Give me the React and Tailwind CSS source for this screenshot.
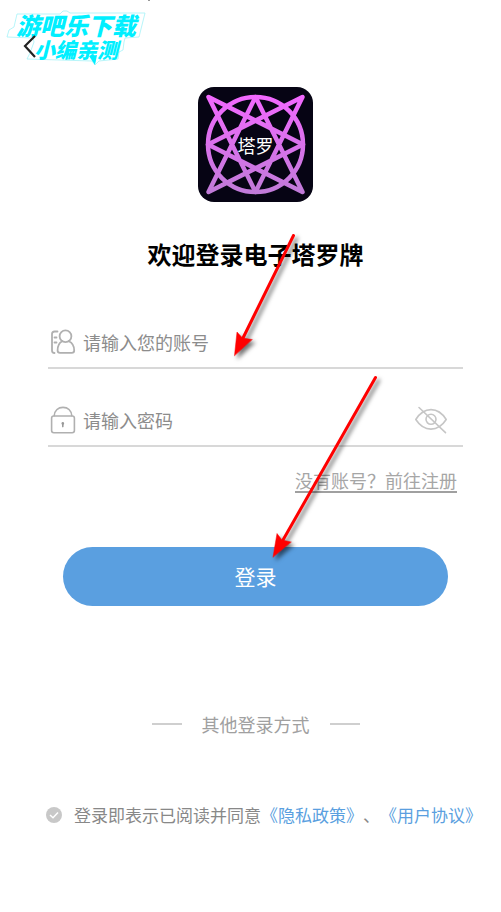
import { useState } from 'react';

function TarotLogo() {
  return (
    <div className="grid size-[115px] place-items-center overflow-hidden rounded-2xl bg-[#060414]">
      <svg viewBox="0 0 115 115" fill="none" className="col-start-1 row-start-1 size-full" aria-hidden="true">
        <defs>
          <linearGradient id="tarot-star" gradientUnits="userSpaceOnUse" x1="0" y1="8" x2="0" y2="107">
            <stop offset="0" stopColor="#f268ff" />
            <stop offset="1" stopColor="#c07bd8" />
          </linearGradient>
        </defs>
        <g stroke="url(#tarot-star)" strokeWidth="4.5" strokeLinejoin="round">
          <circle cx="57.5" cy="57.5" r="47.5" />
          <path d="M57.5 10 L104.5 105 L10 57.5 L104.5 10 L57.5 105 L10.5 10 L105 57.5 L10.5 105 Z" />
        </g>
      </svg>
      <span className="col-start-1 row-start-1 text-lg leading-6 text-white">塔罗</span>
    </div>
  );
}

function AccountIcon() {
  return (
    <svg width="26" height="26" viewBox="0 0 26 26" fill="none" stroke="#b0b0b0" strokeWidth="1.8" strokeLinecap="round" strokeLinejoin="round" aria-hidden="true">
      <path d="M7.5 2.5 H4.5 Q2 2.5 2 5 V21.5 Q2 24 4.5 24 M4.5 8.5 H6.5 M4.5 13.5 H6.5" />
      <circle cx="15.5" cy="7.3" r="5.9" />
      <path d="M12.2 12.2 C9 13.8 7.6 17 7.6 21.5 Q7.6 23.8 10 23.8 H21.8 Q24.2 23.8 24.2 21.5 C24.2 17 22.4 13.8 18.8 12.2" />
    </svg>
  );
}

function LockIcon() {
  return (
    <svg width="26" height="28" viewBox="0 0 26 28" fill="none" stroke="#b0b0b0" strokeWidth="1.6" strokeLinecap="round" aria-hidden="true">
      <rect x="1.6" y="10" width="22.8" height="16.8" rx="2.2" />
      <path d="M4.2 9.8 C4.6 4.6 8.2 1.4 13 1.4 S21.4 4.6 21.8 9.8" />
      <circle cx="12.8" cy="17.4" r="1.3" fill="#999" stroke="none" />
      <path d="M12.8 17.5 V20.6" stroke="#999" />
    </svg>
  );
}

function EyeOffIcon() {
  return (
    <svg width="32" height="28" viewBox="0 0 32 28" fill="none" stroke="#c6c6c6" strokeWidth="1.6" strokeLinecap="round" aria-hidden="true">
      <path d="M0.8 13.5 C9 0.3 23 0.3 31.2 13.5 C23 26.3 9 26.3 0.8 13.5 Z" strokeLinejoin="round" />
      <circle cx="16" cy="13.3" r="5" />
      <path d="M4 1.5 L30.5 26.7" />
    </svg>
  );
}

// Site stamp in the top left corner
function Stamp() {
  return (
    <div className="pointer-events-none absolute top-0 left-0 h-[70px] w-[155px] font-black whitespace-nowrap text-[#00efff] italic">
      <svg viewBox="0 0 155 70" fill="none" className="absolute inset-0 size-full" aria-hidden="true">
        <path
          d="M17 14 H60 L63 11 H67 L70 13 H145 L139 37 L125 38 L124 42 L123 50 L119 52 L118 59 L99 61 L95 65 L92 61 L27 59 L30 53 L34 42 L33 38 L7 37 L9 30 L14 27 Z"
          stroke="#a5f3f8"
          strokeWidth="0.8"
        />
        <path d="M89 56 L97 55 L95 65 Z" fill="#00efff" />
        <rect x="148" width="2" height="1" fill="#999" />
      </svg>
      <div className="relative pt-[11px] pl-4">
        <p className="text-2xl leading-7">游吧乐下载</p>
        <p className="pl-[18px] text-[21px] leading-5">小编亲测</p>
      </div>
    </div>
  );
}

// Pointers that lead to the account field and the login button
function Pointers() {
  return (
    <svg width="501" height="600" viewBox="0 0 501 600" className="pointer-events-none absolute top-0 left-0 drop-shadow-[3px_3px_2px_rgba(0,0,0,0.55)]" aria-hidden="true">
      <g fill="#ff0000" stroke="#ff0000" strokeLinecap="round">
        <path d="M293.5 235.5 L243 338" strokeWidth="3" />
        <path d="M234.5 355.5 L237 332 L242.5 338 L252 339.5 Z" strokeWidth="0.5" />
        <path d="M375.5 377.5 L283 540" strokeWidth="3" />
        <path d="M273 557 L277 533.5 L282 540 L291 542 Z" strokeWidth="0.5" />
      </g>
    </svg>
  );
}

export default function App() {
  const [account, setAccount] = useState('');
  const [password, setPassword] = useState('');
  const [showPassword, setShowPassword] = useState(false);
  const [agreed, setAgreed] = useState(true);

  return (
    <div className="relative min-h-screen overflow-x-hidden bg-white font-['Noto_Sans_CJK_SC',sans-serif]">
      <Stamp />

      <header className="relative h-[87px] pt-8 pl-[22px]">
        <button type="button" aria-label="返回" className="block">
          <svg width="16" height="28" viewBox="0 0 16 28" fill="none" stroke="#222" strokeWidth="2.2" aria-hidden="true">
            <path d="M13 4 L3 14 L13 25" />
          </svg>
        </button>
      </header>

      <main className="pr-[38px] pl-12">
        <div className="flex flex-col items-center">
          <TarotLogo />
          <h1 className="mt-9 text-2xl leading-8 font-bold text-black">欢迎登录电子塔罗牌</h1>
        </div>

        <form className="mt-[46px]" onSubmit={e => e.preventDefault()}>
          <div className="flex h-[53px] items-center gap-[7px] border-b-2 border-[#d8d8d8] pl-[2px]">
            <label htmlFor="account" aria-label="账号">
              <AccountIcon />
            </label>
            <input
              id="account"
              type="text"
              value={account}
              onChange={e => setAccount(e.target.value)}
              placeholder="请输入您的账号"
              className="min-w-0 flex-1 text-lg leading-6 text-[#333] outline-none placeholder:text-[#8c8c8c]"
            />
          </div>

          <div className="mt-[25px] flex h-[53px] items-center gap-[7px] border-b-2 border-[#d8d8d8] pr-4 pl-[2px]">
            <label htmlFor="password" aria-label="密码">
              <LockIcon />
            </label>
            <input
              id="password"
              type={showPassword ? 'text' : 'password'}
              value={password}
              onChange={e => setPassword(e.target.value)}
              placeholder="请输入密码"
              className="min-w-0 flex-1 text-lg leading-6 text-[#333] outline-none placeholder:text-[#8c8c8c]"
            />
            <button type="button" aria-label="显示密码" onClick={() => setShowPassword(!showPassword)}>
              <EyeOffIcon />
            </button>
          </div>

          <div className="mt-[22px] flex justify-end pr-[6px]">
            <a href="#register" className="border-b-2 border-[#a0a0a0] text-lg leading-[22px] text-[#a6a6a6]">
              没有账号？前往注册
            </a>
          </div>

          <div className="mt-[54px] px-[15px]">
            <button type="submit" className="h-[59px] w-full rounded-full bg-[#5a9fe0] text-[21px] text-white">
              登录
            </button>
          </div>
        </form>

        <div className="mt-[106px] flex items-center justify-center gap-5 text-lg leading-6 text-[#a0a0a0]">
          <span className="h-[2px] w-[30px] bg-[#cfcfcf]" />
          <h2>其他登录方式</h2>
          <span className="h-[2px] w-[30px] bg-[#cfcfcf]" />
        </div>
      </main>

      <footer className="mt-[67px] flex items-center gap-3 pl-[46px] text-[17px] leading-6 whitespace-nowrap text-[#888] [text-spacing-trim:space-all]">
        <span className="grid size-4 place-items-center">
          <input
            id="agree"
            type="checkbox"
            checked={agreed}
            onChange={e => setAgreed(e.target.checked)}
            className="col-start-1 row-start-1 size-4 appearance-none rounded-full bg-[#c8c8c8]"
          />
          {agreed && (
            <svg viewBox="0 0 16 16" fill="none" stroke="#fff" strokeWidth="1.5" className="pointer-events-none col-start-1 row-start-1 size-4" aria-hidden="true">
              <path d="M4 8 L7 10.8 L12 5.4" />
            </svg>
          )}
        </span>
        <p>
          <label htmlFor="agree">登录即表示已阅读并同意</label>
          <a href="#privacy" className="text-[#5a9fe0]">《隐私政策》</a>、
          <a href="#terms" className="text-[#5a9fe0]">《用户协议》</a>
        </p>
      </footer>

      <Pointers />
    </div>
  );
}
